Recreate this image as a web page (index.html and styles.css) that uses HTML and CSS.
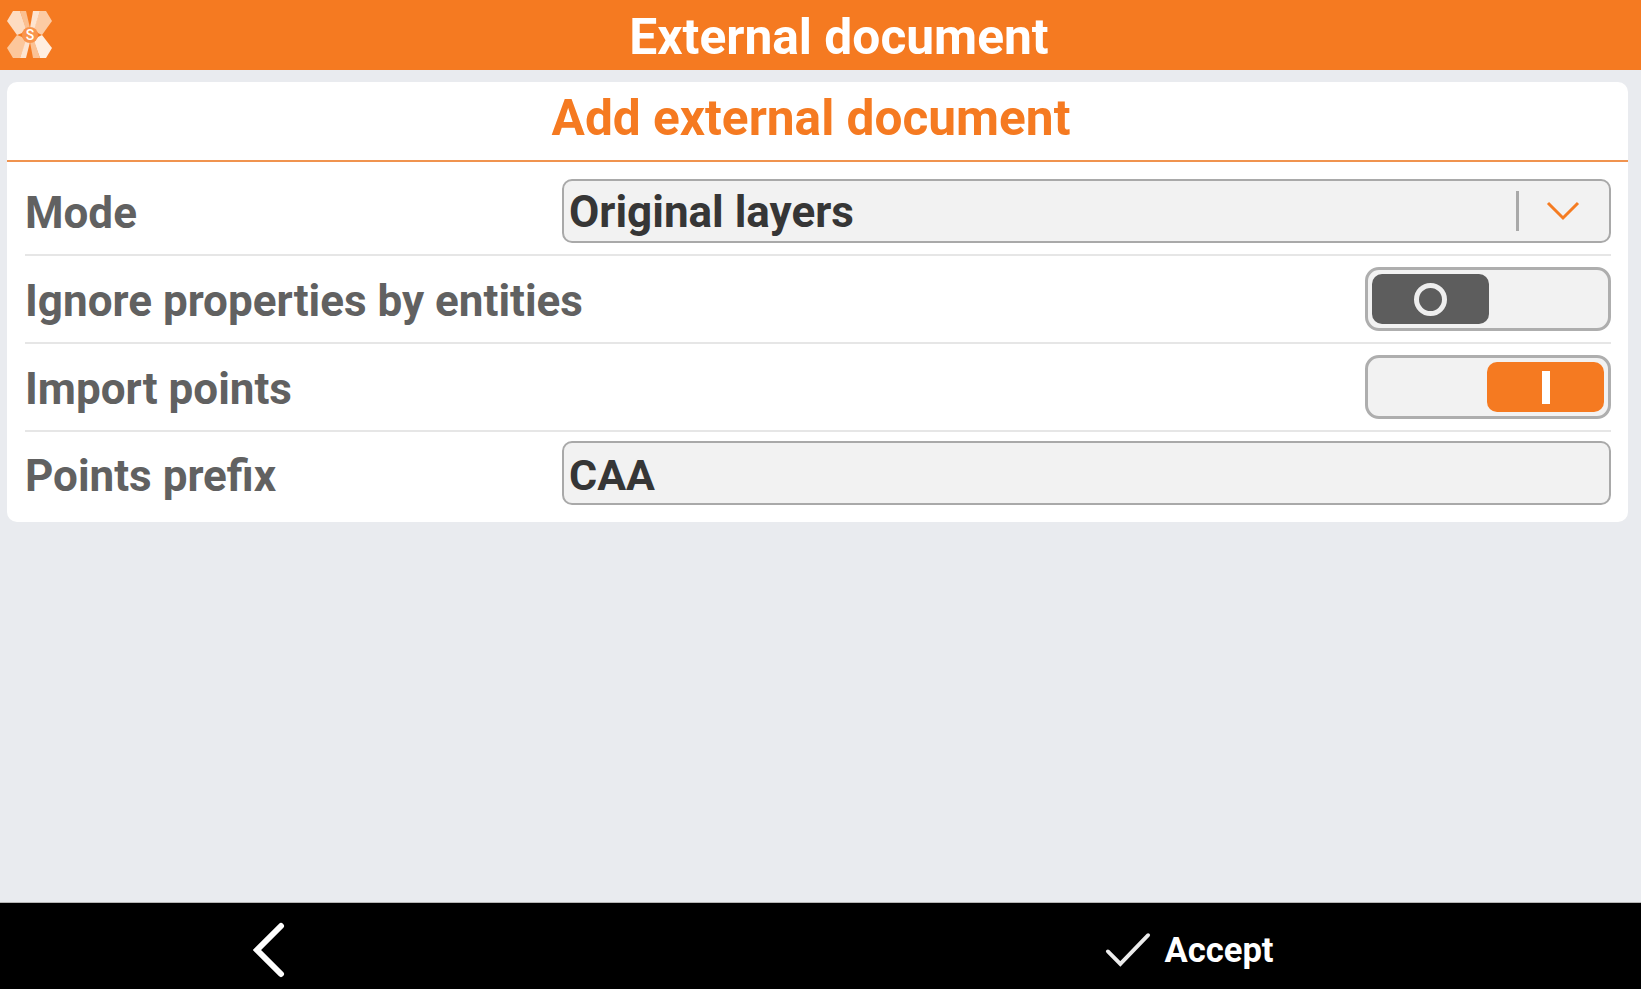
FILE: index.html
```html
<!DOCTYPE html>
<html lang="en">
<head>
<meta charset="utf-8">
<title>External document</title>
<link rel="stylesheet" href="styles.css">
</head>
<body>
<header class="topbar">
  <svg class="logo" viewBox="0 0 46 48" width="46" height="48" aria-hidden="true">
    <polygon points="0,10 6,0 13,0 19,17 15,22 10,24" fill="#fddcc2"/>
    <polygon points="13,0 19,0 23,17 19,19" fill="#fbbf90"/>
    <polygon points="45,10 39,0 33,0 27,17 31,22 35,24" fill="#fccba4"/>
    <polygon points="26,0 33,0 27,19 23,17" fill="#fde4d0"/>
    <polygon points="0,37 10,24 15,26 19,31 13,47 6,47" fill="#fcc79b"/>
    <polygon points="13,47 19,47 23,31 19,29" fill="#fde4d0"/>
    <polygon points="45,37 35,24 31,26 27,31 33,47 39,47" fill="#ffeee0"/>
    <polygon points="33,47 26,47 23,31 27,29" fill="#fbc295"/>
    <circle cx="23" cy="24" r="8" fill="#f9944c"/>
    <text x="23" y="29" text-anchor="middle" class="logo-s">S</text>
  </svg>
  <h1 class="topbar-title">External document</h1>
</header>
<main class="content">
  <section class="card">
    <h2 class="card-title">Add external document</h2>
    <div class="row row-first">
      <span class="label">Mode</span>
      <div class="field select">
        <span class="field-text">Original layers</span>
        <span class="select-divider"></span>
        <svg class="chevron" viewBox="0 0 34 20" width="34" height="20" aria-hidden="true"><path d="M2 2 L17 17 L32 2" fill="none" stroke="#f57c22" stroke-width="3"/></svg>
      </div>
    </div>
    <div class="row">
      <span class="label">Ignore properties by entities</span>
      <div class="toggle">
        <span class="knob knob-off"><span class="ring"></span></span>
      </div>
    </div>
    <div class="row">
      <span class="label">Import points</span>
      <div class="toggle toggle-on">
        <span class="knob knob-on"><span class="bar"></span></span>
      </div>
    </div>
    <div class="row row-last">
      <span class="label">Points prefix</span>
      <div class="field">
        <span class="field-text field-text-short">CAA</span>
      </div>
    </div>
  </section>
</main>
<footer class="bottombar">
  <div class="bottom-slot">
    <svg viewBox="0 0 32 56" width="32" height="56" aria-hidden="true"><path d="M28 4 L4 28 L28 52" fill="none" stroke="#fff" stroke-width="6" stroke-linecap="round"/></svg>
  </div>
  <div class="bottom-slot">
    <svg class="check" viewBox="0 0 48 38" width="46" height="37" aria-hidden="true"><path d="M3 20 L16 33 L45 3" fill="none" stroke="#ececec" stroke-width="4" stroke-linecap="round"/></svg>
    <span class="accept">Accept</span>
  </div>
</footer>
</body>
</html>
```
FILE: styles.css
```css
* { box-sizing: border-box; }
html, body { margin: 0; height: 100%; }
body {
  display: flex;
  flex-direction: column;
  height: 989px;
  background: #e9ebef;
  font-family: Roboto, "Liberation Sans", sans-serif;
  overflow: hidden;
}
.topbar {
  position: relative;
  flex: 0 0 70px;
  display: flex;
  align-items: center;
  justify-content: center;
  padding-left: 37px;
  background: #f57a21;
}
.logo { position: absolute; left: 7px; top: 11px; }
.logo-s { font: 500 14px Roboto, sans-serif; fill: #fff; }
.topbar-title {
  margin: 0;
  padding-top: 3px;
  font-size: 49.7px;
  font-weight: 700;
  color: #fff;
}
.content {
  flex: 1;
  padding: 12px 13px 0 7px;
}
.card {
  background: #fff;
  border-radius: 10px;
  height: 440px;
}
.card-title {
  margin: 0;
  height: 80px;
  line-height: 72px;
  padding-right: 13px;
  text-align: center;
  font-size: 49.6px;
  font-weight: 700;
  color: #f57a21;
  border-bottom: 2px solid #f0934f;
}
.row {
  display: flex;
  align-items: center;
  justify-content: space-between;
  margin: 0 17px 0 18px;
  height: 88px;
  border-bottom: 2px solid #e6e6e6;
}
.row-first { height: 94px; padding-top: 6px; }
.row-last { border-bottom: 0; height: 87px; }
.row-last .field { margin-bottom: 6px; }
.label {
  padding-top: 4px;
  font-size: 44px;
  font-weight: 700;
  color: #616161;
}
.row-last .label { padding-top: 0; }
.field {
  display: flex;
  align-items: center;
  width: 1049px;
  height: 64px;
  padding: 0 5px;
  background: #f2f2f2;
  border: 2px solid #a9a9a9;
  border-radius: 10px;
}
.field-text {
  flex: 1;
  padding-top: 2px;
  font-size: 44px;
  font-weight: 700;
  color: #363636;
}
.field-text-short { padding-top: 4px; font-size: 43px; }
.select-divider {
  width: 3px;
  height: 40px;
  background: #a9a9a9;
}
.chevron { margin: 0 24px 0 27px; }
.toggle {
  display: flex;
  width: 246px;
  height: 64px;
  padding: 4px;
  background: #f2f2f2;
  border: 3px solid #aeaeae;
  border-radius: 14px;
}
.toggle-on { justify-content: flex-end; }
.knob {
  display: flex;
  align-items: center;
  justify-content: center;
  width: 117px;
  height: 50px;
  border-radius: 10px;
}
.knob-off { background: #5d5d5d; }
.knob-on { background: #f57a21; }
.ring {
  width: 33px;
  height: 33px;
  border: 5px solid #eee;
  border-radius: 50%;
}
.bar {
  width: 8px;
  height: 33px;
  background: #fff;
}
.bottombar {
  flex: 0 0 87px;
  display: flex;
  background: #000;
  border-top: 1px solid #b5b5b5;
}
.bottom-slot {
  flex: 1;
  display: flex;
  align-items: center;
  justify-content: center;
  padding-top: 8px;
}
.bottom-slot:first-child { padding-right: 384px; }
.bottom-slot:last-child { padding-right: 183px; }
.check { margin-right: 13px; }
.accept {
  font-size: 34.6px;
  font-weight: 700;
  color: #fff;
}
```
